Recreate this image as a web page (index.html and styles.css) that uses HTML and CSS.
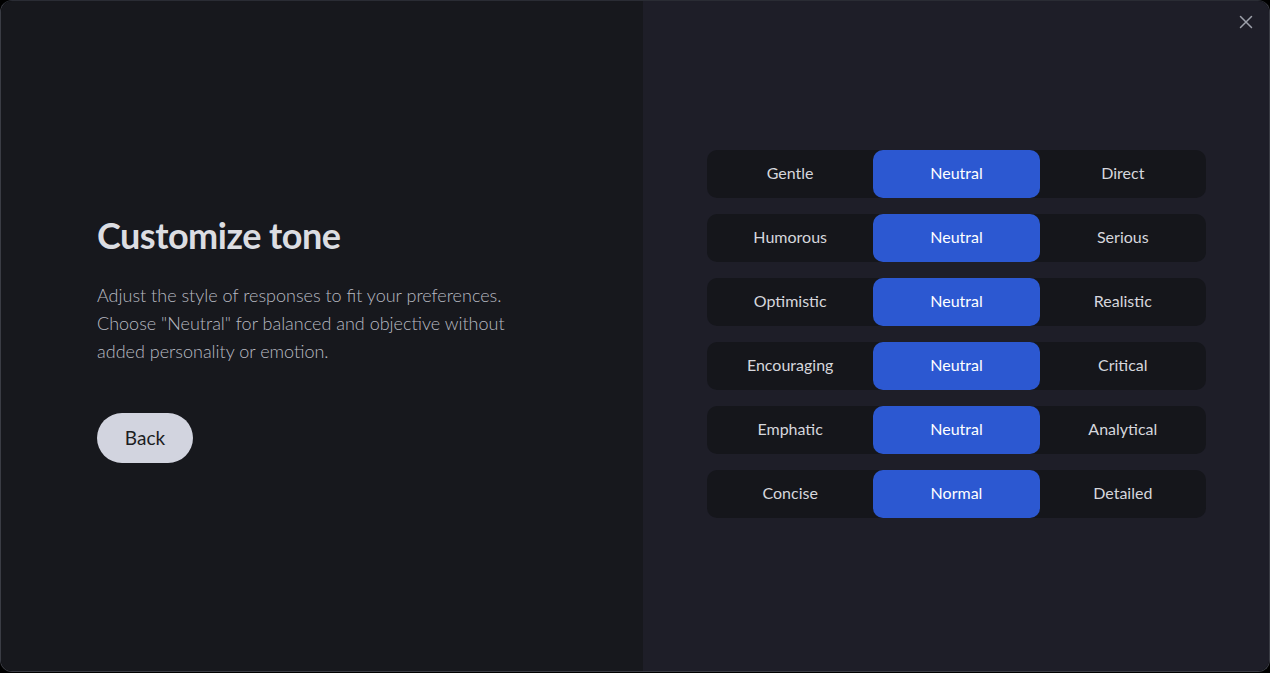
FILE: index.html
```html
<!DOCTYPE html>
<html lang="en">
<head>
<meta charset="utf-8">
<link rel="stylesheet" href="styles.css">
<title>Customize tone</title>
</head>
<body>
<div class="window">
  <section class="left">
    <div class="intro">
      <h1 class="title">Customize tone</h1>
      <p class="desc">Adjust the style of responses to fit your preferences. Choose "Neutral" for balanced and objective without added personality or emotion.</p>
      <button class="back">Back</button>
    </div>
  </section>
  <section class="right">
    <button class="close" aria-label="Close">
      <svg width="14" height="14" viewBox="0 0 14 14"><path d="M1.5 1.5L12.5 12.5M12.5 1.5L1.5 12.5" stroke="#9da0aa" stroke-width="1.5" stroke-linecap="round"/></svg>
    </button>
    <div class="rows">
      <div class="seg"><span class="opt">Gentle</span><span class="opt sel">Neutral</span><span class="opt">Direct</span></div>
      <div class="seg"><span class="opt">Humorous</span><span class="opt sel">Neutral</span><span class="opt">Serious</span></div>
      <div class="seg"><span class="opt">Optimistic</span><span class="opt sel">Neutral</span><span class="opt">Realistic</span></div>
      <div class="seg"><span class="opt">Encouraging</span><span class="opt sel">Neutral</span><span class="opt">Critical</span></div>
      <div class="seg"><span class="opt">Emphatic</span><span class="opt sel">Neutral</span><span class="opt">Analytical</span></div>
      <div class="seg"><span class="opt">Concise</span><span class="opt sel">Normal</span><span class="opt">Detailed</span></div>
    </div>
  </section>
</div>
</body>
</html>
```
FILE: styles.css
```css
* { box-sizing: border-box; }
html, body { margin: 0; padding: 0; background: #000; }
body {
  width: 1270px;
  height: 673px;
  font-family: Lato, "Noto Sans", sans-serif;
}
.window {
  width: 1270px;
  height: 672px;
  display: flex;
  border: 1px solid #3a3c44;
  border-top-color: #2a2c34;
  border-radius: 12px;
  overflow: hidden;
}
.left {
  width: 642px;
  background: #17181d;
  display: flex;
  align-items: center;
  padding-left: 96px;
}
.intro { margin-top: -2px; }
.title {
  margin: 0;
  padding-top: 5px;
  color: #dcdde2;
  font-size: 36px;
  font-weight: 700;
  letter-spacing: -0.5px;
  line-height: 44px;
}
.desc {
  margin: 24px 0 0;
  width: 420px;
  color: #b8bac2;
  font-size: 18px;
  font-weight: 300;
  line-height: 28px;
}
.back {
  margin-top: 48px;
  width: 96px;
  height: 50px;
  border: none;
  border-radius: 25px;
  background: #d2d4df;
  color: #1c1d22;
  font-family: inherit;
  font-size: 19px;
  font-weight: 400;
  padding: 0;
}
.right {
  flex: 1;
  background: #1e1e28;
  position: relative;
  padding: 149px 0 0 64px;
}
.close {
  position: absolute;
  top: 12px;
  right: 14px;
  width: 18px;
  height: 18px;
  padding: 2px;
  background: none;
  border: none;
  display: flex;
}
.rows {
  display: flex;
  flex-direction: column;
  gap: 16px;
  width: 499px;
}
.seg {
  display: flex;
  height: 48px;
  background: #15161b;
  border-radius: 10px;
}
.opt {
  flex: 1;
  display: flex;
  align-items: center;
  justify-content: center;
  padding-bottom: 3px;
  color: #d6d7dd;
  font-size: 16px;
  font-weight: 400;
  border-radius: 10px;
}
.opt.sel {
  background: #2c58d1;
  color: #ffffff;
}
```
